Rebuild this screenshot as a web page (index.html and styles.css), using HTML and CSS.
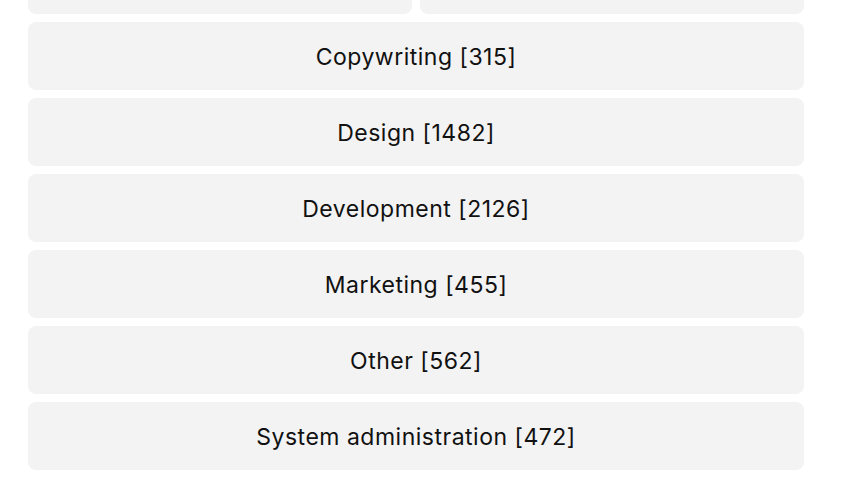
FILE: index.html
```html
<!DOCTYPE html>
<html lang="en">
<head>
    <meta charset="UTF-8">
    <meta name="viewport" content="width=device-width, initial-scale=1.0">
    <title>Categories</title>
    <link rel="stylesheet" href="styles.css">
</head>
<body>
    <div class="list">
        <div class="row-pair">
            <div class="card"></div>
            <div class="card"></div>
        </div>
        <div class="card">Copywriting [315]</div>
        <div class="card">Design [1482]</div>
        <div class="card">Development [2126]</div>
        <div class="card">Marketing [455]</div>
        <div class="card">Other [562]</div>
        <div class="card">System administration [472]</div>
    </div>
</body>
</html>
```
FILE: styles.css
```css
body {
    margin: 0;
    padding: 0 56px 0 28px;
    font-family: Inter, "Noto Sans", sans-serif;
    background-color: #fff;
    color: #111;
}
.list {
    display: flex;
    flex-direction: column;
    gap: 8px;
    margin-top: -54px;
}
.row-pair {
    display: grid;
    grid-template-columns: 1fr 1fr;
    gap: 8px;
}
.card {
    height: 68px;
    display: flex;
    align-items: center;
    justify-content: center;
    padding-top: 2px;
    box-sizing: border-box;
    background-color: #f3f3f3;
    border-radius: 8px;
    font-size: 23px;
    letter-spacing: 0.5px;
}
```
